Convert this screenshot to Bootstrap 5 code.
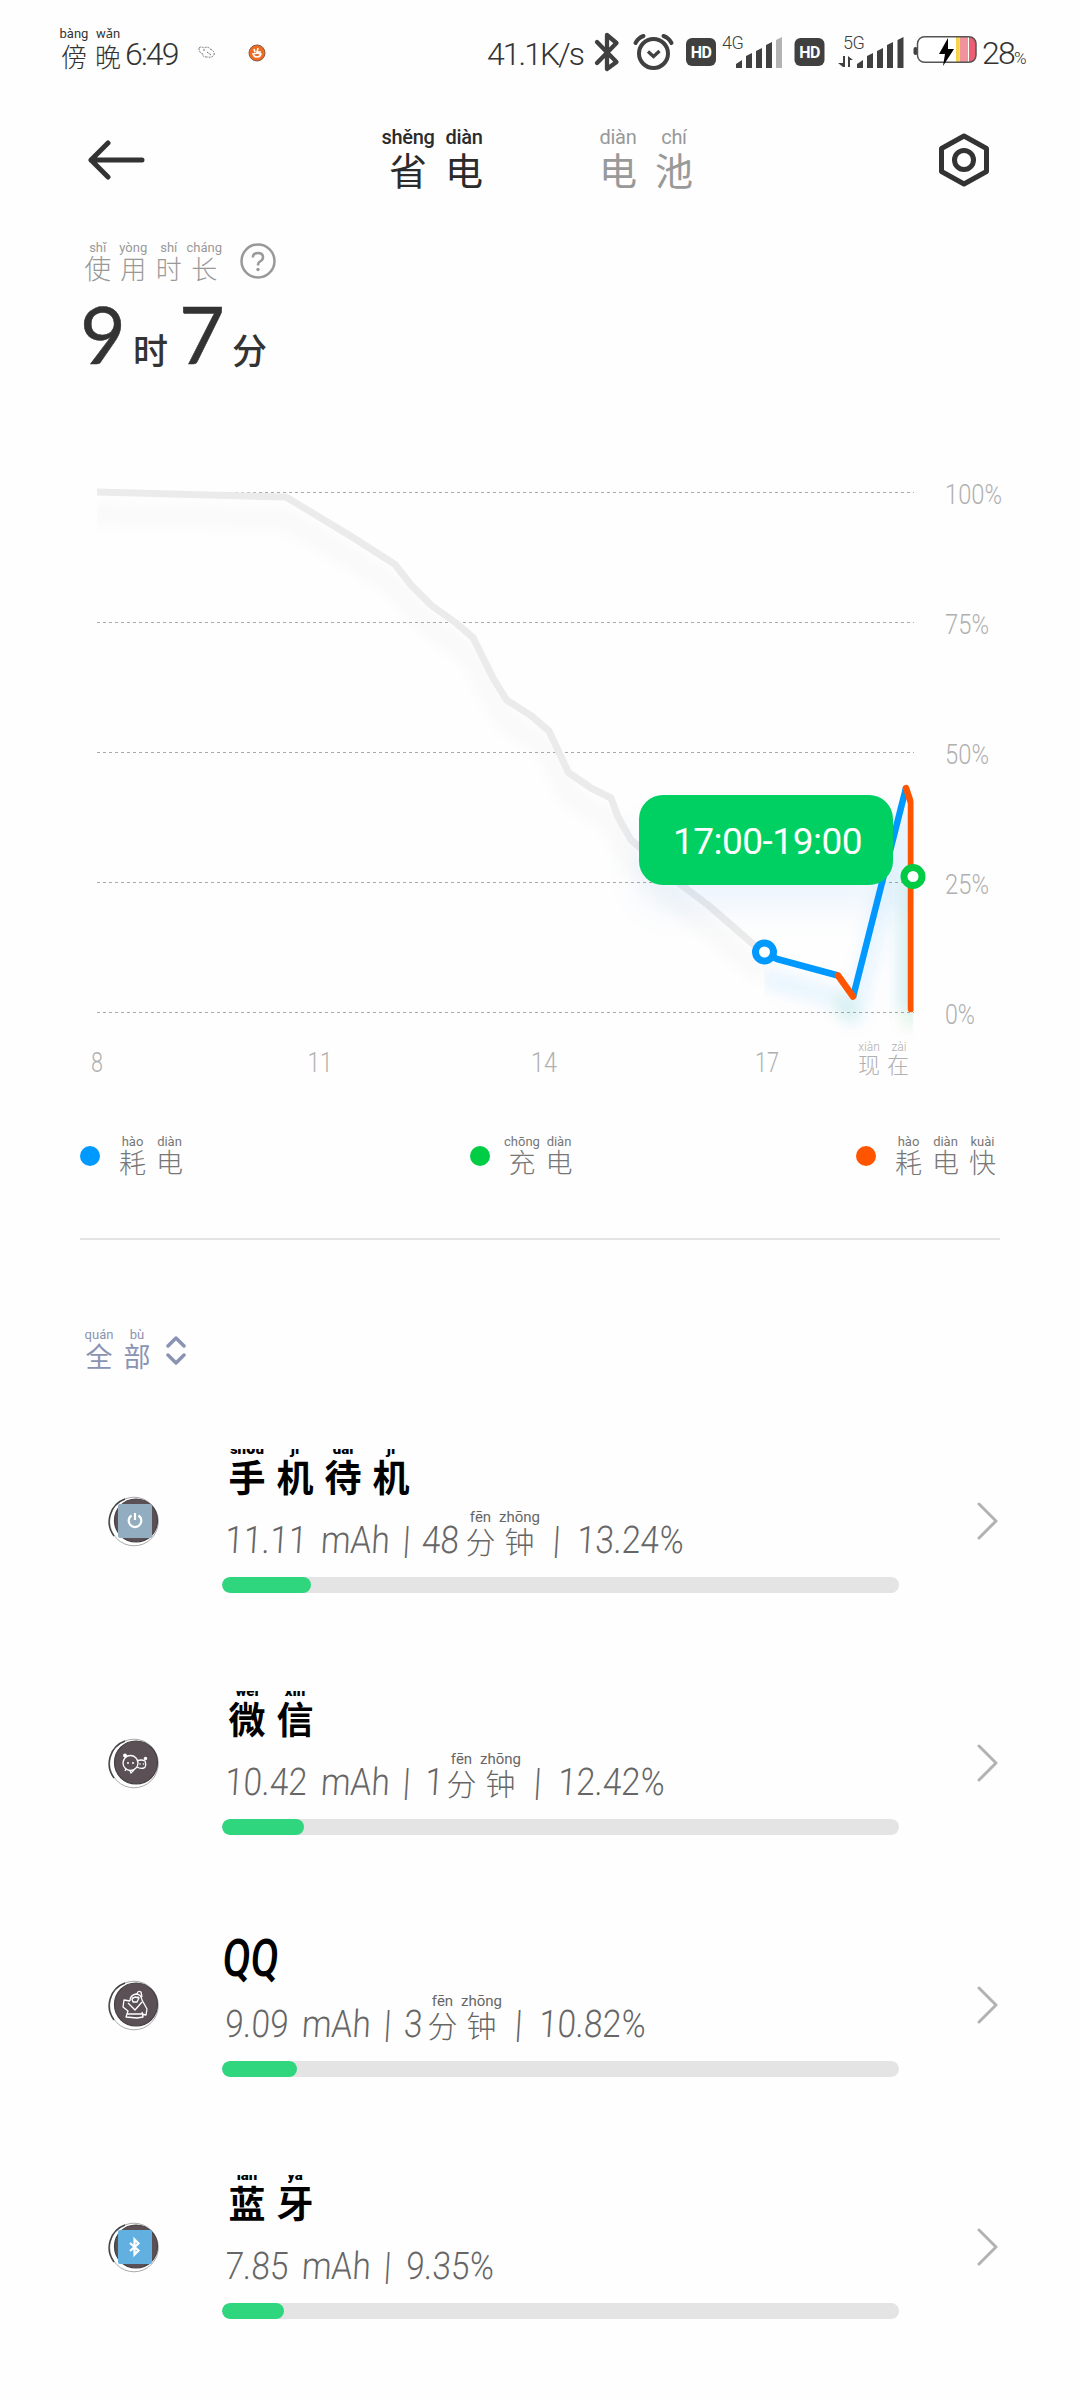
<!DOCTYPE html>
<html lang="zh-CN">
<head>
  <meta charset="UTF-8">
  <meta name="viewport" content="width=device-width, initial-scale=1.0">
  <title>省电</title>
  <link href="https://cdn.jsdelivr.net/npm/bootstrap@5.3.0/dist/css/bootstrap.min.css" rel="stylesheet">
  <style>
    body {
      width: 1080px;
      background-color: #fefefe;
      color: #333;
      font-family: Roboto, "Noto Sans CJK SC", sans-serif;
      font-weight: 300;
      overflow-x: hidden;
    }
    svg {
      display: block;
      flex-shrink: 0;
    }
    ruby {
      display: flex;
      flex-direction: column-reverse;
      align-items: center;
      flex-shrink: 0;
      white-space: nowrap;
      font-family: "Noto Sans CJK SC", sans-serif;
    }
    rt {
      display: block;
      font-family: Roboto, "Noto Sans", sans-serif;
      font-weight: 400;
    }

    /* status bar */
    .status-bar {
      height: 106px;
      padding: 0 54px 0 57px;
      font-size: 32px;
      line-height: 40px;
      letter-spacing: -1.8px;
    }
    .status-bar ruby { width: 34px; font-size: 26px; line-height: 30px; letter-spacing: 0; margin-top: -8px; }
    .status-bar rt { font-size: 13px; line-height: 14px; }
    .status-time { width: 57px; margin-top: 1px; }
    .status-speed { width: 103px; margin: 1px 0 0 221px; letter-spacing: -2px; }
    .status-pct { font-size: 17px; }

    /* header */
    .top-bar { height: 108px; padding: 0 91px 0 88px; }
    .tab-item ruby { width: 56px; font-size: 38px; line-height: 42px; font-weight: 400; }
    .tab-item rt { font-size: 20px; line-height: 20px; letter-spacing: -.3px; margin: -3px 0 1px; }
    .tab-first { margin-left: 235px; color: #2b2b2b; }
    .tab-second { margin-left: 98px; color: #999; }
    .tab-first rt { font-weight: 500; }
    .btn-settings { margin-left: 237px; }

    /* usage time */
    .usage { height: 246px; padding: 26px 0 0 80px; }
    .usage-label { color: #999; height: 42px; }
    .usage-label ruby { width: 35.5px; font-size: 27px; line-height: 28px; }
    .usage-label rt { font-size: 13px; line-height: 13px; }
    .usage-label ruby:nth-of-type(n+2) { font-size: 26px; }
    .usage-value { font-family: Lato, "Noto Sans CJK SC", sans-serif; font-weight: 400; line-height: 80px; margin-top: 12px; }
    .big-digit { font-size: 79px; width: 53px; -webkit-text-stroke: .5px #333; }
    .unit { font-size: 35px; width: 46px; font-weight: 500; }

    /* chart */
    .chart-box { height: 640px; }
    .chart-box text { font-size: 28px; fill: #b0b0b0; }
    .chart-box .pinyin { font-size: 12px; }
    .chart-tip {
      left: 639px;
      top: 335px;
      width: 254px;
      height: 90px;
      border-radius: 24px;
      background: #00d062;
      font-size: 37px;
      font-weight: 400;
      padding: 4px 0 0 3px;
      letter-spacing: -.5px;
      box-shadow: 0 24px 36px rgba(0, 130, 230, .07);
    }

    .legend-row { height: 140px; margin: 0 80px; border-bottom: 2px solid #e4e4e4; color: #777; padding-top: 36px; }
    .legend-row ruby { width: 37px; font-size: 27px; line-height: 28px; }
    .legend-row rt, .filter-btn rt { font-size: 13px; line-height: 12px; }
    .dot { width: 20px; height: 20px; margin: 10px 14px 0 0; }
    .dot-use { background: #0099ff; }
    .dot-charge { background: #00cc44; margin-left: 3px; }
    .dot-fast { background: #ff5500; }
    .legend-last { margin-right: -1px; }

    .filter-btn { height: 160px; padding: 89px 0 0 80px; color: #8b93b3; }
    .filter-btn ruby { width: 38px; font-size: 27px; line-height: 29px; font-weight: 400; }

    /* app list */
    .app-row { height: 242px; padding: 0 82px 0 108px; }
    .app-body { width: 678px; height: 144px; margin-left: 62px; }
    .app-title {
      height: 50px;
      overflow: hidden;
      color: #000;
      font-weight: 700;
      line-height: 46px;
      padding-left: 1px;
    }
    .app-title ruby { width: 48px; font-size: 37px; height: 58px; }
    .app-title rt { font-size: 15px; line-height: 15px; margin-bottom: -4px; font-weight: 900; }
    .app-title .latin { font-size: 52px; font-weight: 500; line-height: 48px; transform: scaleX(.78) skewX(-6deg); transform-origin: left; }
    .app-detail { height: 63px; font-size: 38px; line-height: 44px; color: #666; padding-left: 3px; }
    .app-detail ruby { width: 39px; font-size: 30px; line-height: 44px; }
    .app-detail rt { font-size: 15px; line-height: 15px; margin-bottom: -7px; }
    .app-detail span { flex-shrink: 0; white-space: pre; transform-origin: left; transform: scaleX(.88) skewX(-4deg); }
    .app-detail .after-ruby { margin-left: 14px; }
    .progress { --bs-progress-height: 16px; --bs-progress-bg: #e4e4e4; --bs-progress-bar-bg: #2fd67e; border-radius: 8px; margin-top: 15px; }
    .progress-bar { border-radius: 8px; }
    .chevron { margin-left: 77px; }
  </style>
</head>
<body>

<header class="status-bar d-flex align-items-center">
  <ruby>傍<rt>bàng</rt></ruby><ruby>晚<rt>wǎn</rt></ruby>
  <span class="status-time">6:49</span>
  <svg class="ms-3" width="18" height="14" viewBox="0 0 18 14" fill="none" stroke="#777" stroke-width="1" stroke-dasharray="2 1">
    <path d="M1 2Q3 0 6 2Q10 0 12 3Q17 5 16 9Q14 12 9 11Q4 11 5 8Q1 7 1 2M5 4h3M9 6l4 3"/>
  </svg>
  <svg width="18" height="18" viewBox="0 0 18 18" style="margin-left: 32px">
    <circle cx="9" cy="9" r="8" fill="#ef6c23" stroke="#8a5b45"/>
    <path d="M6 5l1 3M10 4L9 8h4M5 10q1 3 4 3t4-3l-4-1zM11 12l1 1" fill="none" stroke="#fff" stroke-width="1.6"/>
  </svg>
  <span class="status-speed">41.1K/s</span>
  <svg width="388" height="46" viewBox="588 30 388 46" fill="#404040">
    <path d="M595 42L614.500 62L605 69V35L614.500 43L595 63" fill="none" stroke="#404040" stroke-width="4.300" stroke-linejoin="round" stroke-linecap="round"/>
    <g fill="none" stroke="#404040" stroke-width="4">
      <circle cx="651.500" cy="53.500" r="14.500"/>
      <path d="M633.500 43Q636 38 641.500 36M669.500 43Q667 38 661.500 36" stroke-linecap="round"/>
      <path d="M646 51.500l5.500 5 6-5.500" stroke-width="3.300"/>
    </g>
    <rect x="684" y="38" width="30" height="28" rx="6"/>
    <rect x="792.500" y="38" width="30" height="28" rx="6"/>
    <g font-size="16" font-weight="700" fill="#fff" text-anchor="middle" letter-spacing="-.5">
      <text x="699" y="58">HD</text>
      <text x="807.500" y="58">HD</text>
    </g>
    <g font-size="18" letter-spacing="-.5">
      <text x="720" y="49">4G</text>
      <text x="841" y="49">5G</text>
    </g>
    <path d="M734 68v-4l6-4v8zM744 68V56l6-3v15zM754 68V51l6-3v20zM764 68V45l6-3v26z"/>
    <path d="M774 68V40l6-3v31z" fill="#b3b3b3"/>
    <path d="M855 68v-4l6-4v8zM865 68V56l6-3v15zM875 68V51l6-3v20zM885 68V45l6-3v26zM895.500 68V40l6-3v31z"/>
    <path d="M841 56v7h-5l5 4h2V56zM846 67V56l5 4h-3v7z"/>
    <rect x="911.500" y="47" width="4" height="8" rx="2"/>
    <rect x="915.500" y="36.700" width="58.500" height="25.600" rx="7" fill="#fff"/>
    <path d="M954 37h3v25h-3z" fill="#f7d34c"/>
    <path d="M957.500 37h8.500v25h-8.500z" fill="#f0939b"/>
    <path d="M967 37h3q4 1 4 6v13q0 5-4 6h-3z" fill="#eb5f73"/>
    <rect x="915.500" y="36.700" width="58.500" height="25.600" rx="7" fill="none" stroke="#555" stroke-width="1.500"/>
    <path d="M946 38L937 54h6l-2 12 11-17h-6z" fill="#000"/>
  </svg>
  <span class="ms-1 mt-1">28<span class="status-pct">%</span></span>
</header>

<nav class="top-bar d-flex align-items-center">
  <svg width="57" height="40" viewBox="0 0 57 40" fill="none" stroke="#333" stroke-width="5" stroke-linecap="round" stroke-linejoin="round">
    <path d="M20 3L3 20l17 17M3 20h51"/>
  </svg>
  <div class="tab-item tab-first d-flex"><ruby>省<rt>shěng</rt></ruby><ruby>电<rt>diàn</rt></ruby></div>
  <div class="tab-item tab-second d-flex"><ruby>电<rt>diàn</rt></ruby><ruby>池<rt>chí</rt></ruby></div>
  <svg class="btn-settings" width="50" height="54" viewBox="0 0 50 54" fill="none" stroke="#333" stroke-width="5" stroke-linejoin="round">
    <path d="M25 3L47.500 15.500v23L25 51 2.500 38.500v-23z"/>
    <circle cx="25" cy="27" r="9.500"/>
  </svg>
</nav>

<section class="usage">
  <div class="usage-label d-flex">
    <ruby>使<rt>shǐ</rt></ruby><ruby>用<rt>yòng</rt></ruby><ruby>时<rt>shí</rt></ruby><ruby>长<rt>cháng</rt></ruby>
    <svg width="36" height="36" viewBox="0 0 36 36" fill="none" stroke="#999" stroke-width="2.500" style="margin: 3px 0 0 18px">
      <circle cx="18" cy="18" r="16.500"/>
      <path d="M12.800 14.500Q13 10 18 10t5 4.300Q23 17 20 18.500 18 19.500 18 22.500"/>
      <circle cx="18" cy="26.500" r="1.700" fill="#999" stroke="none"/>
    </svg>
  </div>
  <div class="usage-value d-flex align-items-baseline">
    <span class="big-digit">9</span><span class="unit">时</span><span class="big-digit">7</span><span class="unit">分</span>
  </div>
</section>

<section class="chart-box position-relative">
  <svg id="chart" width="1080" height="640" viewBox="0 460 1080 640" fill="none">
    <defs>
      <filter id="soft" filterUnits="userSpaceOnUse" x="60" y="460" width="900" height="640"><feGaussianBlur stdDeviation="7"/></filter>
      <clipPath id="plot"><rect x="97" y="470" width="816.500" height="600"/></clipPath>
      <clipPath id="active"><rect x="764" y="470" width="149.500" height="600"/></clipPath>
    </defs>
    <g id="grid" stroke="#aaa" stroke-width="1" stroke-dasharray="3 3"></g>
    <g clip-path="url(#plot)" stroke-linejoin="round">
      <g filter="url(#soft)" stroke-width="20">
        <polyline class="past" stroke="#000" stroke-opacity=".02" transform="translate(0 22)"/>
      </g>
      <g clip-path="url(#active)">
        <path d="M764 978L838 998L853 1016L906 815V1010" stroke="#0099ff" stroke-opacity=".08" stroke-width="22" filter="url(#soft)"/>
        <path d="M840 998L853 1014M911 880V1028" stroke="#00aa44" stroke-opacity=".09" stroke-width="18" filter="url(#soft)"/>
      </g>
      <polyline class="past" stroke="#ebebeb" stroke-width="7"/>
      <g stroke-width="6.500">
        <path d="M764 953L777 959L838 975.500M853 997L906 788" stroke="#0099ff"/>
        <path d="M838 975.500L853 996.500M906 788L911 803V1009" stroke="#ff5500" stroke-linecap="round"/>
      </g>
    </g>
    <circle cx="764.500" cy="952" r="9" fill="#fff" stroke="#0099ff" stroke-width="7"/>
    <circle cx="913" cy="876.500" r="9" fill="#fff" stroke="#00cc44" stroke-width="7"/>
    <text x="869" y="1051" class="pinyin" text-anchor="middle">xiàn</text>
    <text x="899" y="1051" class="pinyin" text-anchor="middle">zài</text>
    <text x="858" y="1073" style="font-size: 22px; letter-spacing: 7px">现在</text>
  </svg>
  <div class="chart-tip position-absolute text-white d-flex align-items-center justify-content-center"><span>17:00-19:00</span></div>
</section>

<div class="legend-row d-flex justify-content-between align-items-start">
  <div class="d-flex align-items-start"><span class="dot dot-use rounded-circle"></span><ruby>耗<rt>hào</rt></ruby><ruby>电<rt>diàn</rt></ruby></div>
  <div class="d-flex align-items-start"><span class="dot dot-charge rounded-circle"></span><ruby>充<rt>chōng</rt></ruby><ruby>电<rt>diàn</rt></ruby></div>
  <div class="legend-last d-flex align-items-start"><span class="dot dot-fast rounded-circle"></span><ruby>耗<rt>hào</rt></ruby><ruby>电<rt>diàn</rt></ruby><ruby>快<rt>kuài</rt></ruby></div>
</div>

<div class="filter-btn d-flex align-items-start">
  <ruby>全<rt>quán</rt></ruby><ruby>部<rt>bù</rt></ruby>
  <svg width="22" height="30" viewBox="0 0 22 30" fill="none" stroke="#8b93b3" stroke-width="3.500" stroke-linecap="round" stroke-linejoin="round" style="margin: 7px 0 0 9px">
    <path d="M3 10l8-8 8 8M3 19l8 8 8-8"/>
  </svg>
</div>

<main id="app-list"></main>

<script src="https://cdn.jsdelivr.net/npm/bootstrap@5.3.0/dist/js/bootstrap.bundle.min.js"></script>
<script>
  const svgNS = 'http://www.w3.org/2000/svg';
  const pastPoints = '90,492 97,492 286,497 353,537.5 395,564.5 411,585 431.5,605.5 456,623 473,637.5 493,678 506.5,700 531.5,716 549,731 568.5,772.5 591,788 611,798 618,817 631,840 652,858 680,884 708,905 753,944 764,952';
  document.querySelectorAll('.past').forEach(line => line.setAttribute('points', pastPoints));

  const chart = document.getElementById('chart');
  const grid = document.getElementById('grid');

  function addLabel(text, x, y, length, anchor) {
    const label = document.createElementNS(svgNS, 'text');
    label.setAttribute('x', x);
    label.setAttribute('y', y);
    label.setAttribute('textLength', length);
    label.setAttribute('lengthAdjust', 'spacingAndGlyphs');
    label.setAttribute('text-anchor', anchor);
    label.textContent = text;
    chart.appendChild(label);
  }

  [[100, 57], [75, 44], [50, 44], [25, 44], [0, 30]].forEach(([percent, length], index) => {
    const y = 492.5 + index * 130;
    const line = document.createElementNS(svgNS, 'path');
    line.setAttribute('d', `M97 ${y}H914`);
    grid.appendChild(line);
    addLabel(`${percent}%`, 945, y + 11.5, length, 'start');
  });
  [['8', 97, 12], ['11', 320, 25], ['14', 544, 26], ['17', 767, 24]].forEach(([hour, x, length]) => {
    addLabel(hour, x, 1072, length, 'middle');
  });

  const glyphs = {
    power: `<rect x="10" y="9" width="34" height="34" rx="2" fill="#91adbf"/>
      <path d="M23.500 20.500a6.300 6.300 0 1 0 7 0M27 18v7" stroke="#fff" stroke-width="2.200" fill="none"/>`,
    pals: `<g fill="none" stroke="#fff" stroke-width="1.300">
      <circle cx="22.500" cy="26" r="7.500"/><path d="M29 24q4-2 8 0 2 5-1 7-4 1-7-1M18 32l-1 2M22 34l1 2 3-3"/></g>
      <g fill="#fff"><circle cx="17" cy="18.500" r="2"/><circle cx="37.500" cy="21.500" r="1.700"/><circle cx="20" cy="26" r="1"/><circle cx="25" cy="26" r="1"/><circle cx="32" cy="27" r=".8"/><circle cx="35.500" cy="27" r=".8"/></g>`,
    penguin: `<g fill="none" stroke="#fff" stroke-width="1.300" stroke-linejoin="round">
      <path d="M22 22q0-6 6-7 5 0 6 6l5 9-1 6-4-1M22 22l-6-1-1 7 5 4-2 6 11 1 6-1-1-5M19 35h15M20 24l7 7 7-8M24 20l3-2 4 1-2 4h-4z"/><path d="M29 15q1-4 4-2l1 5"/></g>
      <circle cx="25" cy="18.500" r=".8" fill="#fff"/><circle cx="30" cy="18" r=".8" fill="#fff"/>`,
    bluetooth: `<rect x="10" y="9" width="34" height="34" rx="2" fill="#62b0e0"/>
      <path d="M22 22l8.500 7.500-4 4V18.500l4 4-8.500 7.500" stroke="#fff" stroke-width="2.200" fill="none"/>`
  };

  const ruby = pairs => pairs.map(([zi, py]) => `<ruby>${zi}<rt>${py}</rt></ruby>`).join('');
  const minutes = ruby([['分', 'fēn'], ['钟', 'zhōng']]);

  // each detail part is [text, width in px]
  const apps = [
    { icon: 'power', title: ruby([['手', 'shǒu'], ['机', 'jī'], ['待', 'dài'], ['机', 'jī']]), parts: [['11.11', 96], ['mAh', 82], ['|', 19], ['48', 39]], end: '13.24%', bar: 13.13 },
    { icon: 'pals', title: ruby([['微', 'wēi'], ['信', 'xìn']]), parts: [['10.42', 96], ['mAh', 82], ['|', 22], ['1', 17]], end: '12.42%', bar: 12.1 },
    { icon: 'penguin', title: '<span class="latin">QQ</span>', parts: [['9.09', 77], ['mAh', 82], ['|', 20], ['3', 19]], end: '10.82%', bar: 11.06 },
    { icon: 'bluetooth', title: ruby([['蓝', 'lán'], ['牙', 'yá']]), parts: [['7.85', 77], ['mAh', 82], ['|', 22]], end: '9.35%', bar: 9.14 }
  ];

  const part = ([text, width], cls = '') => `<span class="${cls}" style="width: ${width}px">${text}</span>`;

  document.getElementById('app-list').innerHTML = apps.map(app => `
    <div class="app-row d-flex align-items-center">
      <svg width="52" height="52" viewBox="0 0 52 52">
        <circle cx="26" cy="26.500" r="24.300" fill="#fff" stroke="#aaa" stroke-width="1"/>
        <path d="M17 4A24 24 0 0 0 6 41" fill="none" stroke="#444" stroke-width="1.500"/>
        <circle cx="28" cy="25.500" r="21.500" fill="#5a5055" stroke="#454043" stroke-width="1.200"/>
        ${glyphs[app.icon]}
      </svg>
      <div class="app-body">
        <div class="app-title d-flex align-items-end">${app.title}</div>
        <div class="app-detail d-flex align-items-end">
          ${app.parts.map(item => part(item)).join('')}
          ${app.parts.length > 3 ? minutes + part(['|', 24], 'after-ruby') : ''}
          ${part([app.end, 104])}
        </div>
        <div class="progress" role="progressbar"><div class="progress-bar" style="width: ${app.bar}%"></div></div>
      </div>
      <svg class="chevron" width="22" height="38" viewBox="0 0 22 38" fill="none" stroke="#b2b2b2" stroke-width="3" stroke-linecap="round" stroke-linejoin="round">
        <path d="M3 2l17 17L3 36"/>
      </svg>
    </div>`).join('');
</script>
</body>
</html>
